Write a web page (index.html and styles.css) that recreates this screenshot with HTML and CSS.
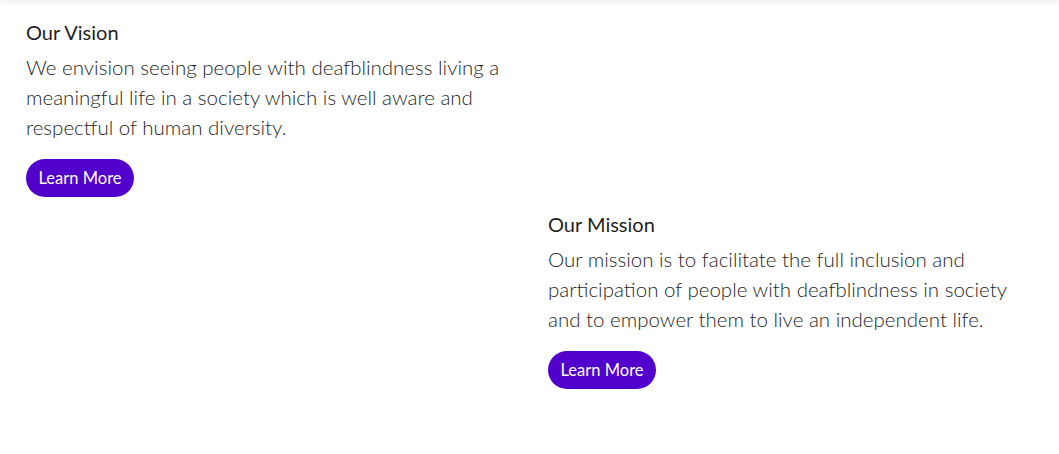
FILE: index.html
```html
<!DOCTYPE html>
<html lang="en">
<head>
<meta charset="utf-8">
<title>Vision and Mission</title>
<link rel="stylesheet" href="styles.css">
</head>
<body>
<div class="topbar"></div>
<main class="grid">
  <section class="block block-vision">
    <h2 class="title">Our Vision</h2>
    <p class="text">We envision seeing people with deafblindness living a meaningful life in a society which is well aware and respectful of human diversity.</p>
    <a class="btn" href="#">Learn More</a>
  </section>
  <section class="block block-mission">
    <h2 class="title">Our Mission</h2>
    <p class="text">Our mission is to facilitate the full inclusion and participation of people with deafblindness in society and to empower them to live an independent life.</p>
    <a class="btn" href="#">Learn More</a>
  </section>
</main>
</body>
</html>
```

FILE: styles.css
```css
html, body {
  margin: 0;
  padding: 0;
  background: #ffffff;
}
body {
  font-family: Lato, "Open Sans", "Liberation Sans", sans-serif;
  color: #222;
}
.topbar {
  height: 0;
  box-shadow: 0 0 6px 1px rgba(0, 0, 0, 0.18);
}
.grid {
  display: grid;
  grid-template-columns: 1fr 1fr;
  column-gap: 26px;
  row-gap: 15px;
  padding: 20px 15px 0 26px;
}
.block-vision {
  grid-column: 1;
  grid-row: 1;
}
.block-mission {
  grid-column: 2;
  grid-row: 2;
}
.block {
  display: flex;
  flex-direction: column;
  align-items: flex-start;
}
.title {
  margin: 0 0 8px;
  font-size: 20px;
  line-height: 24px;
  font-weight: 400;
  color: #1f1f1f;
}
.text {
  max-width: 488px;
  margin: 0 0 17px;
  font-size: 20.5px;
  line-height: 30px;
  font-weight: 300;
  color: #1f1f1f;
}
.btn {
  display: inline-flex;
  align-items: center;
  justify-content: center;
  height: 38px;
  padding: 0 12.5px;
  border-radius: 19px;
  background: #5200cc;
  color: #fff;
  font-size: 16.5px;
  text-decoration: none;
}
```
